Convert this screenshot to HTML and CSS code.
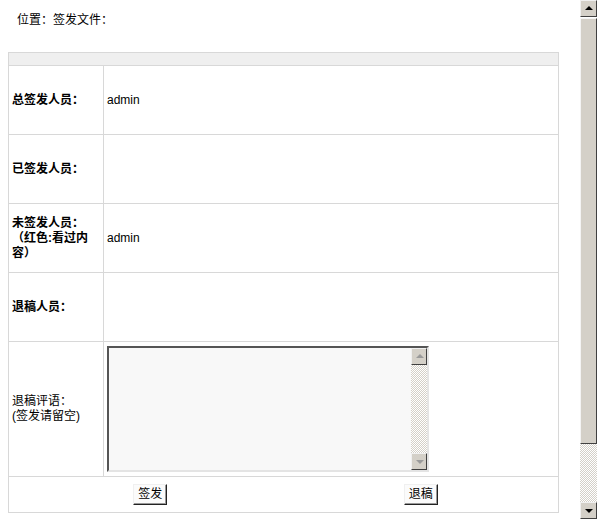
FILE: index.html
```html
<!DOCTYPE html>
<html lang="zh-CN">
<head>
  <meta charset="UTF-8">
  <title>签发文件</title>
  <link rel="stylesheet" href="styles.css">
</head>
<body>
  <div class="location">位置：签发文件：</div>

  <form class="sign-form">
    <table class="sign-table">
      <tr class="head-row"><td colspan="2"></td></tr>
      <tr>
        <th>总签发人员：</th>
        <td>admin</td>
      </tr>
      <tr>
        <th>已签发人员：</th>
        <td></td>
      </tr>
      <tr>
        <th>未签发人员：（红色:看过内容）</th>
        <td>admin</td>
      </tr>
      <tr>
        <th>退稿人员：</th>
        <td></td>
      </tr>
      <tr class="memo-row">
        <th class="plain">退稿评语：<br>(签发请留空)</th>
        <td>
          <div class="memo">
            <textarea name="memo"></textarea>
            <div class="memo-bar">
              <span class="sb-btn up dim"></span>
              <span class="sb-track"></span>
              <span class="sb-btn down dim"></span>
            </div>
          </div>
        </td>
      </tr>
      <tr class="btn-row">
        <td colspan="2">
          <div class="actions">
            <div class="half"><button type="button">签发</button></div>
            <div class="half"><button type="button">退稿</button></div>
          </div>
        </td>
      </tr>
    </table>
  </form>

  <!-- 页面滚动条 -->
  <div class="page-scroll">
    <span class="sb-btn up"></span>
    <span class="sb-thumb"></span>
    <span class="sb-track"></span>
    <span class="sb-btn down"></span>
  </div>
</body>
</html>
```

FILE: styles.css
```css
body {
  margin: 0;
  font-family: "Liberation Sans", "Noto Sans CJK SC", sans-serif;
  font-size: 12px;
  color: #000;
  background: #fff;
}
.location {
  padding: 12px 17px 0;
  line-height: 16px;
  height: 40px;
}
.sign-form {
  margin: 0 0 0 8px;
}
.sign-table {
  width: 551px;
  border-collapse: collapse;
  border: 1px solid #d4d4d4;
}
.sign-table th,
.sign-table td {
  border: 1px solid #d8d8d8;
  padding: 0 3px;
  height: 68px;
  line-height: 15px;
  vertical-align: middle;
  text-align: left;
}
.sign-table th {
  width: 88px;
  font-weight: bold;
}
.sign-table th.plain {
  font-weight: normal;
}
.head-row td {
  height: 12px;
  padding: 0;
  background: #efefef;
}
.memo-row th,
.memo-row td {
  height: 134px;
}
.btn-row td {
  height: 35px;
  padding: 0;
}
.memo {
  display: flex;
  width: 318px;
  height: 122px;
  border: 2px solid;
  border-color: #555 #e4e4e4 #e4e4e4 #555;
}
.memo textarea {
  flex: 1;
  border: none;
  margin: 0;
  padding: 2px;
  resize: none;
  background: #f8f8f8;
  font: inherit;
}
.memo-bar,
.page-scroll {
  display: flex;
  flex-direction: column;
  width: 17px;
}
.memo-bar {
  width: 16px;
}
.sb-btn {
  position: relative;
  height: 17px;
  flex: none;
  background: #d4d0c8;
  box-sizing: border-box;
  border: 1px solid;
  border-color: #f0f0f0 #404040 #404040 #f0f0f0;
}
.sb-btn::after {
  content: "";
  position: absolute;
  left: 4px;
  top: 5px;
  border-left: 4px solid transparent;
  border-right: 4px solid transparent;
}
.sb-btn.up::after {
  border-bottom: 4px solid #000;
}
.sb-btn.down::after {
  top: 6px;
  border-top: 4px solid #000;
}
.sb-btn.dim::after {
  border-bottom-color: #9a9a9a;
  border-top-color: #9a9a9a;
}
.sb-track {
  flex: 1;
  background: repeating-conic-gradient(#d4d0c8 0 25%, #fff 0 50%) 0 0 / 2px 2px;
}
.sb-thumb {
  height: 426px;
  flex: none;
  background: #d4d0c8;
  box-sizing: border-box;
  border: 1px solid;
  border-color: #f4f4f4 #404040 #404040 #f4f4f4;
  margin-top: 1px;
}
.page-scroll {
  position: fixed;
  top: 0;
  right: 0;
  height: 100vh;
  background: #fff;
}
.actions {
  display: flex;
}
.half {
  flex: 1;
  text-align: center;
}
button {
  font: inherit;
  height: 21px;
  padding: 0 4px;
  background: #fbfbfb;
  border: 1px solid;
  border-color: #f0f0f0 #222 #222 #f0f0f0;
  box-shadow: inset -1px -1px 0 #999;
}
.half:first-child button {
  margin-left: 8px;
}
```
